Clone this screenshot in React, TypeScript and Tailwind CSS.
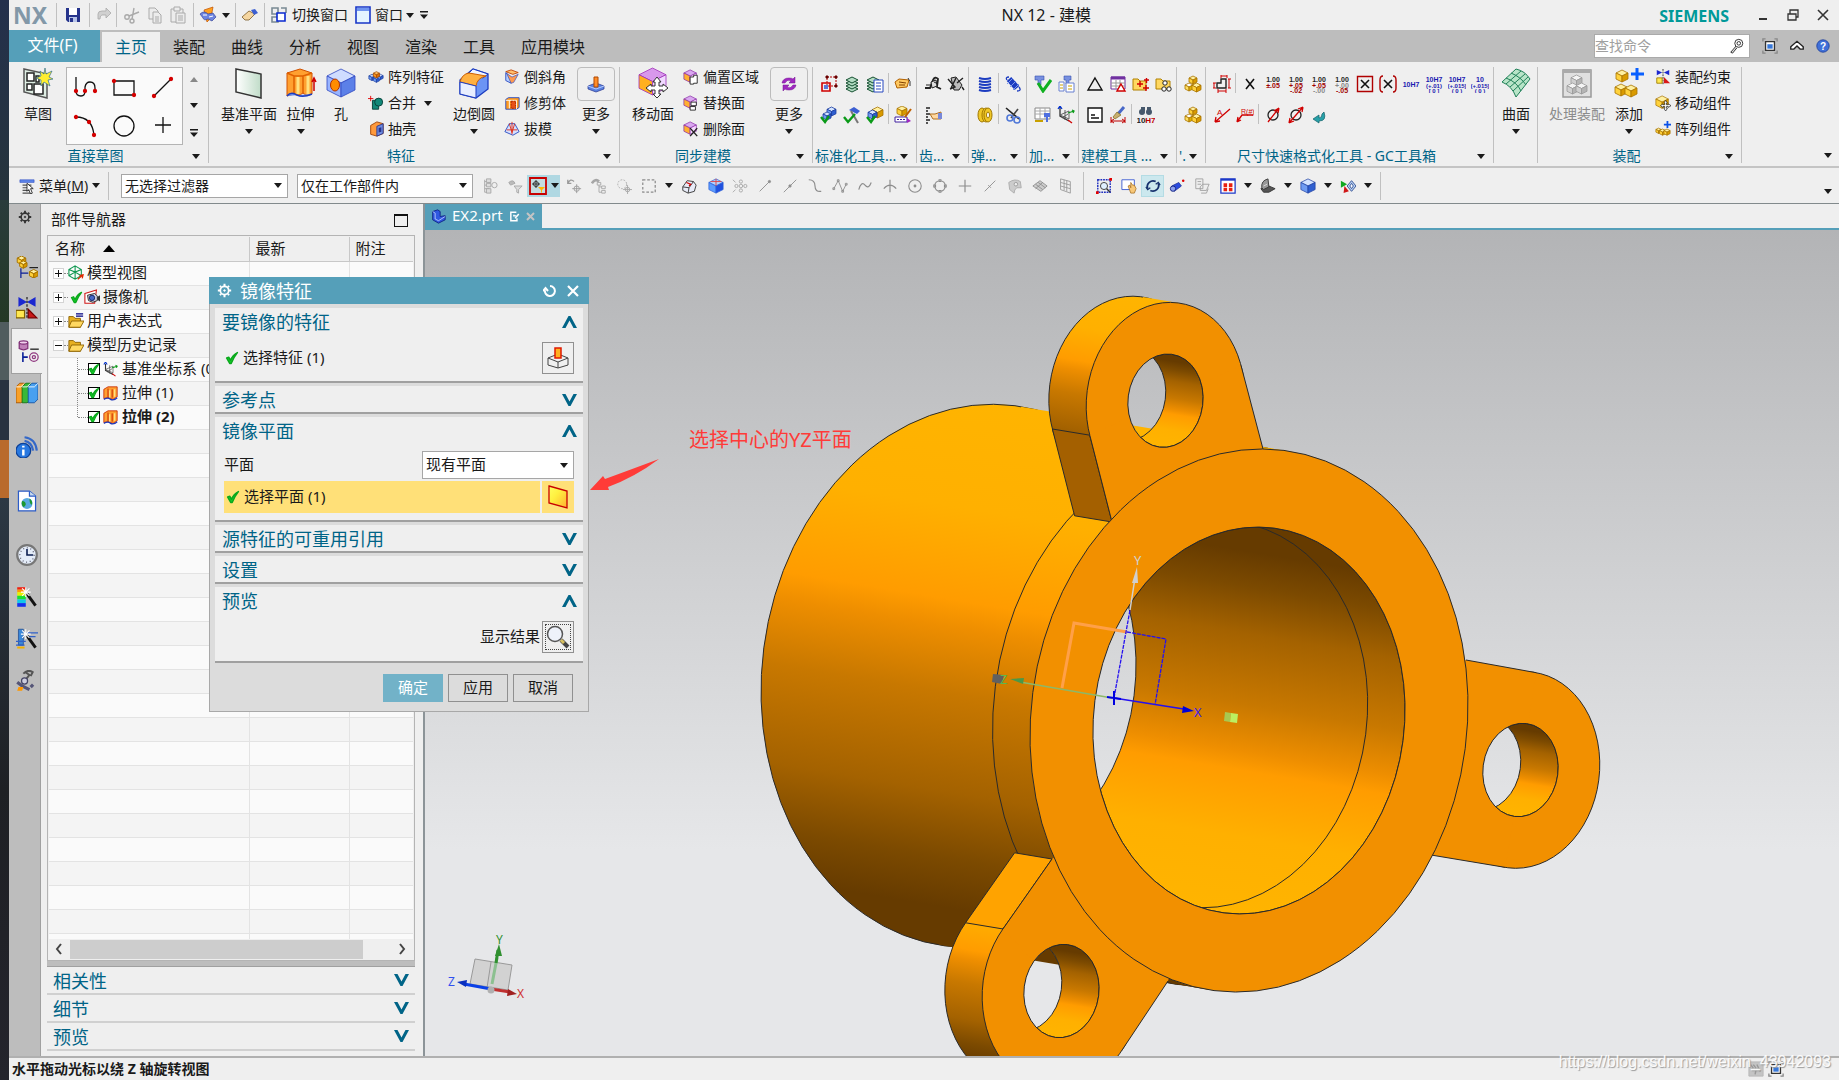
import type { ReactNode } from 'react'
import clsx from 'clsx'

type Pt = [number, number]

const pts = (list: Pt[]) => list.map((p) => p.join(',')).join(' ')

/* ---------- small drawing helpers ---------- */

function Cube({ x = 1, y = 1, s = 16, top = '#fff0a0', left = '#ffd23c', right = '#d99a00', line = '#a87400' }) {
  const h = s / 2
  const q = s / 4
  return (
    <g stroke={line} strokeWidth="0.8" strokeLinejoin="round">
      <polygon fill={top} points={pts([[x + h, y], [x + s, y + q], [x + h, y + h], [x, y + q]])} />
      <polygon fill={left} points={pts([[x, y + q], [x + h, y + h], [x + h, y + s], [x, y + s - q]])} />
      <polygon fill={right} points={pts([[x + s, y + q], [x + h, y + h], [x + h, y + s], [x + s, y + s - q]])} />
    </g>
  )
}

const blue = { top: '#d4e4ff', left: '#6f9cf2', right: '#2f5fd0', line: '#1c3ea0' }
const purple = { top: '#d9a8f0', left: '#ffb030', right: '#f6d9ff', line: '#8a2aa8' }
const grey = { top: '#f4f4f4', left: '#d0d0d0', right: '#b4b4b4', line: '#999' }

const Tick = () => (
  <path d="M2 9 L5 8 L7 12 C9 7 12 4 16 2 C12 7 10 11 8 16 L6 16 Z" fill="#14c828" stroke="#0aa81c" strokeWidth="1.8" strokeLinejoin="round" />
)

function Tol({ a, b, color = '#a00000', low = color }: { a: string; b: string; color?: string; low?: string }) {
  return (
    <g fontFamily="Liberation Sans, sans-serif" fontSize="7" fontWeight="700" textAnchor="middle">
      <text x="9" y="7" fill="#222">1.00</text>
      <text x="9" y="13" fill={color}>{a}</text>
      <text x="9" y="18" fill={low}>{b}</text>
    </g>
  )
}

function Fit({ a, b, c }: { a: string; b?: string; c?: string }) {
  return (
    <g fontFamily="Liberation Sans, sans-serif" fontSize="7" fontWeight="700" fill="#1a1ab0" textAnchor="middle">
      <text x="9" y={b ? 7 : 12}>{a}</text>
      {b && <text x="9" y="13" fontSize="6">{b}</text>}
      {c && <text x="9" y="18" fontSize="6">{c}</text>}
    </g>
  )
}

/* ---------- icons, all on an 18 x 18 grid ---------- */

const ICONS: Record<string, ReactNode> = {
  save: <g><path d="M2 2H16V16H4L2 14Z" fill="#26348c" /><path d="M5 2H13V9H5Z" fill="#fff" /><path d="M5 11H13V16H5Z" fill="#b8c4e8" /><path d="M6 12H9V16H6Z" fill="#26348c" /></g>,
  redo: <path d="M4 13V8Q4 5 8 5H12V2L17 7L12 12V9H8Q6 9 6 13Z" fill="#d0d0d0" stroke="#aaa" strokeWidth="0.8" />,
  cut: <g stroke="#aaa" fill="none" strokeWidth="1.4"><circle cx="4" cy="11" r="2.2" /><circle cx="9" cy="15" r="2" /><path d="M6 10L16 6M9 13L11 2" /></g>,
  copy: <g stroke="#aaa" fill="#ececec"><path d="M3 2H9L12 5V13H3Z" /><path d="M7 6H12L15 9V17H7Z" /><path d="M9 11H13M9 13H13M9 15H13" /></g>,
  paste: <g stroke="#aaa" fill="#ececec"><path d="M2 3H14V16H2Z" /><path d="M5 1H11V5H5Z" /><path d="M7 7H16V17H7Z" /><path d="M9 10H14M9 12H14M9 14H14" /></g>,
  orient: <g><path d="M5 4L14 1L12 12L8 16Z" fill="#ffa01e" stroke="#c05000" strokeWidth="0.7" /><path d="M1 8Q5 4 9 8L14 7L17 11L13 15L9 13Q5 15 4 12Z" fill="#6c84e0" stroke="#26348c" strokeWidth="0.6" /><path d="M4 9L8 9M10 11L14 10" stroke="#fff" /></g>,
  hand: <g><path d="M1 11L8 5L14 8L8 14H4Z" fill="#f5d6a0" stroke="#7a5a28" strokeWidth="0.8" /><path d="M10 4L14 3L17 7L13 9Z" fill="#3c5fd2" /></g>,
  switchWin: <g fill="none" strokeWidth="1.6"><path d="M2 2H8V8H2ZM11 2H16V7M2 11H8V16H2Z" stroke="#7a8a94" /><path d="M7 7H15V15H7Z" stroke="#0a2ad0" fill="#fff" /></g>,
  win: <g><path d="M2 1H16V17H2Z" fill="#e4f4ff" stroke="#1836c8" strokeWidth="1.6" /><path d="M3 2H15V5H3Z" fill="#6f94f0" /></g>,
  pattern: <g><Cube x={1} y={6} s={7} {...blue} /><Cube x={6} y={8} s={7} {...blue} /><Cube x={11} y={6} s={6} {...blue} /><Cube x={6} y={3} s={7} top="#ffc060" left="#ff9a1e" right="#e07000" line="#a04800" /></g>,
  unite: <g><path d="M5 6H12V16H5Z" fill="#128878" stroke="#043c34" /><circle cx="12" cy="8" r="4.5" fill="#128878" stroke="#043c34" /><path d="M3 1V7M0 4H6" stroke="#e00000" /></g>,
  shell: <g><path d="M3 5L10 1L17 3V14L10 17L3 15Z" fill="#ff9a3c" stroke="#a04000" /><path d="M10 6L17 3V14L10 17Z" fill="#6f8ce0" stroke="#26348c" /><path d="M12 8L15 7V12L12 13Z" fill="#26348c" /></g>,
  chamfer: <g><path d="M2 3L10 6L16 4L8 1Z" fill="#ffc070" stroke="#c04000" /><path d="M2 4V13L8 16V10Z" fill="#b8d0ff" stroke="#2848c0" /><path d="M3 5L9 9L16 6L11 15L8 16Z" fill="#ff9a50" stroke="#2848c0" strokeWidth="0.7" /></g>,
  trim: <g><path d="M2 5L5 3H17V14L14 16H2Z" fill="#ff9a1e" stroke="#2848c0" /><path d="M6 6V15M2 6H14V16" stroke="#fff" fill="none" /><path d="M8 7H13V15H8Z" fill="#e85018" stroke="#a82000" strokeDasharray="2 1" /></g>,
  draft: <g fill="none"><path d="M6 3H12L17 12L10 16L1 12Z" fill="#d4e0ff" stroke="#2848c0" /><path d="M9 1V15M6 3L9 13L12 3M3 10H15" stroke="#e02810" /></g>,
  moreFeat: <g><path d="M1 11L9 8L17 11V14L9 17L1 14Z" fill="#5a82e0" stroke="#26348c" strokeWidth="0.7" /><path d="M1 11L9 14L17 11" fill="none" stroke="#b8ccff" /><path d="M7 2H11V12H7Z" fill="#ff8c28" stroke="#b04800" /></g>,
  moreSync: <g fill="#a028c0" stroke="#701090" strokeWidth="0.5"><path d="M2 8Q3 3 9 3Q12 3 13 4L15 2V8H9L11 6Q7 4 5 8Z" /><path d="M16 10Q15 15 9 15Q6 15 5 14L3 16V10H9L7 12Q11 14 13 10Z" /></g>,
  offsetFace: <g><Cube x={1} y={1} s={14} {...purple} /><path d="M8 9H12V7H16V16H12V17H8Z" fill="#fff" stroke="#222" /></g>,
  replaceFace: <g><Cube x={1} y={1} s={14} {...purple} /><path d="M9 8H15V12H9ZM8 13H14V17H8Z" fill="#fff" stroke="#222" /></g>,
  deleteFace: <g><Cube x={1} y={1} s={14} {...purple} /><path d="M8 8L16 17M16 8L8 17" stroke="#222" strokeWidth="1.6" /></g>,
  frames: <g fill="none"><path d="M7 2H16V11H7Z" stroke="#b00000" strokeDasharray="2 1" /><path d="M2 8H10V16H2Z" stroke="#d00000" strokeWidth="1.6" /><path d="M4 10H8V14H4Z" fill="#5c78d8" /><path d="M6 1h2v2H6ZM15 1h2v2h-2ZM15 10h2v2h-2Z" fill="#600" stroke="#600" /></g>,
  layers: <g stroke="#145030" fill="#b4dcc4">{[14, 11, 8, 5].map((y) => <path key={y} d={`M3 ${y}L9 ${y - 3}L15 ${y}L9 ${y + 3}Z`} />)}</g>,
  layersDoc: <g stroke="#145030" fill="#b4dcc4">{[14, 11, 8, 5].map((y) => <path key={y} d={`M1 ${y}L7 ${y - 3}L13 ${y}L7 ${y + 3}Z`} />)}<path d="M8 5H17V17H8Z" fill="#fff" stroke="#2848c0" /><path d="M10 8H15M10 11H15M10 14H15" stroke="#2848c0" /></g>,
  tag: <g><path d="M1 7L5 4L15 5L13 12L3 13Z" fill="#ffc860" stroke="#b06000" /><path d="M5 7L12 8M5 10L11 10" stroke="#804000" /><path d="M14 3Q17 6 16 11" stroke="#333" fill="none" /></g>,
  partCheck: <g><Cube x={7} y={1} s={9} {...blue} /><Cube x={3} y={6} s={8} {...blue} /><path d="M1 11L5 16L9 10" stroke="#0a9a18" strokeWidth="2.4" fill="none" /></g>,
  toolCheck: <g><path d="M6 4L11 1L17 5L14 8Z" fill="#3c5fd2" /><path d="M15 17L8 5" stroke="#777" strokeWidth="2" /><path d="M1 11L5 16L12 8" stroke="#0a9a18" strokeWidth="2.4" fill="none" /></g>,
  cubeCheck: <g><Cube x={6} y={1} s={11} /><Cube x={2} y={4} s={9} {...blue} /><path d="M1 11L5 16L9 10" stroke="#0a9a18" strokeWidth="2.4" fill="none" /></g>,
  partEdit: <g><Cube x={3} y={0} s={10} /><path d="M1 11H13V16H1Z" fill="#fff" stroke="#4020a0" /><path d="M3 13.500H11" stroke="#4020a0" strokeDasharray="2 1" /><path d="M17 3L11 11" stroke="#c06000" strokeWidth="2" /><path d="M13 12L17 15L13 17Z" fill="#a028c0" /></g>,
  gearA: <g stroke="#222" fill="none"><path d="M1 13H6L9 5Q11 1 14 4L13 12L17 14" strokeWidth="1.8" /><path d="M7 7L12 5L13 11L8 13Z" fill="#ddd" /><path d="M2 10L8 10M10 7L14 9" /></g>,
  gearB: <g stroke="#222" fill="#bbb"><path d="M4 3L9 2L15 10L12 15L7 15Z" /><path d="M1 4L8 12L3 14M16 3L10 8M9 3L4 13M15 12L17 15" fill="none" strokeWidth="1.4" /></g>,
  gearHand: <g><path d="M2 2H6M2 5H4M2 8H6M2 11H4M2 14H6M2 17H4" stroke="#222" strokeWidth="1.4" /><path d="M6 8H11L17 6V13H9Z" fill="#ffd8a0" stroke="#b07020" /><path d="M14 7H18V13H14Z" fill="#7888d8" /></g>,
  springV: <g stroke="#1c3cc0" strokeWidth="2" fill="none">{[3, 6, 9, 12, 15].map((y) => <path key={y} d={`M3 ${y}Q9 ${y + 2} 15 ${y}`} />)}</g>,
  springD: <g stroke="#1c3cc0" fill="none"><path d="M5 4L13 13" strokeWidth="6" /><path d="M3 9L9 3M6 12L12 6M9 15L15 9" stroke="#7c98f0" strokeWidth="1" /><path d="M3 5Q1 2 5 2M15 12Q18 16 13 16" strokeWidth="1.3" /></g>,
  springY: <g stroke="#a07800" fill="#f0c828"><ellipse cx="6" cy="9" rx="4" ry="7" /><ellipse cx="10" cy="9" rx="4" ry="7" /><ellipse cx="12" cy="9" rx="4" ry="7" /><ellipse cx="12" cy="9" rx="1.500" ry="3" fill="#fff" /></g>,
  springCut: <g fill="none"><path d="M2 2L15 13" stroke="#222" strokeWidth="1.6" /><path d="M14 3L7 12" stroke="#444" strokeWidth="1.6" /><circle cx="6" cy="12" r="3" stroke="#5078d8" strokeWidth="1.6" /><circle cx="13" cy="14" r="3" stroke="#5078d8" strokeWidth="1.6" /></g>,
  clampCheck: <g><path d="M1 1H10V5H7V10H4V5H1Z" fill="#7890e0" stroke="#3850b0" strokeWidth="0.6" /><path d="M4 8L9 16L17 5" stroke="#10b020" strokeWidth="3" fill="none" /></g>,
  clampDoc: <g><path d="M7 1H14V5H12V9H9V5H7Z" fill="#7890e0" stroke="#3850b0" strokeWidth="0.6" /><path d="M2 7H7V16H2ZM9 8H17V17H9Z" fill="#fff" stroke="#6880d0" /><path d="M11 11H15M11 14H15M3 10H6M3 13H6" stroke="#c8a000" /></g>,
  sheetClamp: <g><path d="M1 2H16V13H1Z" fill="#fff" stroke="#888" /><path d="M1 5H16M1 8H16M6 2V13M11 2V13" stroke="#aaa" /><path d="M10 7H16V11H14V16H12V11H10Z" fill="#5070e0" /><path d="M1 15H9" stroke="#c8a000" strokeWidth="2" /></g>,
  csys: <g fill="none" strokeWidth="1.3"><path d="M3 2V10L12 15" stroke="#333" /><path d="M3 9L12 5V13ZM8 4V14M5 12L11 8" stroke="#555" strokeWidth="0.9" /><path d="M11 7L17 5M15 4L17 5L16 7" stroke="#0a9a18" /><path d="M11 14L15 17" stroke="#d00000" /><path d="M1 3L3 0L5 3" stroke="#0030d0" /></g>,
  triangle: <path d="M9 3L16 15H2Z" fill="none" stroke="#111" strokeWidth="1.400" />,
  tableTri: <g><path d="M2 2H16V14H2Z" fill="#fff" stroke="#7030a0" /><path d="M2 3H16" stroke="#7030a0" strokeWidth="3" /><path d="M2 8H16M2 11H16M7 5V14M11 5V14" stroke="#999" /><path d="M12 9L16 16H8Z" fill="#fff" stroke="#d00000" strokeWidth="1.4" /></g>,
  folderPlus: <g><path d="M1 4H6L8 6H14V15H1Z" fill="#ffd860" stroke="#b08000" /><path d="M5 9h6M8 6v6M11 13h6M14 10v6M12 5h5M14.500 3v5" stroke="#d00000" strokeWidth="1.400" /></g>,
  folderCog: <g><path d="M1 4H6L8 6H15V14H1Z" fill="#ffd860" stroke="#b08000" /><g fill="#fff" stroke="#222"><circle cx="10" cy="8" r="2.200" /><circle cx="9" cy="14" r="2.200" /><circle cx="14" cy="14" r="2.200" /></g></g>,
  noteBox: <g fill="none" stroke="#111" strokeWidth="1.400"><path d="M2 2H16V16H2Z" fill="#fff" /><path d="M5 9H9M5 12H13" /></g>,
  brushDim: <g><path d="M15 1L9 8" stroke="#4868c8" strokeWidth="3" /><path d="M8 6L12 9L6 13L4 11Z" fill="#c8b070" stroke="#806820" strokeWidth="0.7" /><path d="M2 11V17M16 11V17M2 15H16M5 13L2 15L5 17M13 13L16 15L13 17" stroke="#c00000" fill="none" /></g>,
  binoc: <g><g fill="#46586c"><circle cx="5" cy="6" r="3" /><circle cx="12" cy="6" r="3" /><path d="M4 1H8V5H4ZM10 1H14V5H10Z" /></g><text x="9" y="17" fontSize="8" fontWeight="700" textAnchor="middle" fontFamily="Liberation Sans, sans-serif" fill="#222">10<tspan fill="#c00000">H7</tspan></text></g>,
  cubes: <g><Cube x={5} y={1} s={8} /><Cube x={1} y={8} s={8} top="#fff" left="#ffe060" right="#e0b000" /><Cube x={8} y={8} s={9} /></g>,
  dimShape: <g fill="none"><path d="M4 13V8H8V4H13V13Z" stroke="#222" strokeWidth="1.400" /><path d="M1 8V13M0 8H3M0 13H3M16 4V13M15 4H18M15 13H18M5 16H13M5 14V18M13 14V18M8 1H14M8 0V3M14 0V3" stroke="#d00000" /></g>,
  xPlain: <path d="M5 4L13 14M13 4L5 14" stroke="#111" strokeWidth="1.600" />,
  tol1: <Tol a="±.05" b="" />,
  tol2: <Tol a="+.05" b="-.02" />,
  tol3: <Tol a="+.05" b="-.00" low="#888" />,
  tol4: <Tol a="+.00" b="-.05" color="#888" low="#a00000" />,
  xBox: <g fill="none"><path d="M1.500 1.500H16.500V16.500H1.500Z" stroke="#b00000" strokeWidth="1.400" /><path d="M5 5L13 13M13 5L5 13" stroke="#111" strokeWidth="1.600" /></g>,
  xParen: <g fill="none"><path d="M4 1Q1 1 1 5V13Q1 17 4 17M14 1Q17 1 17 5V13Q17 17 14 17" stroke="#b00000" strokeWidth="1.400" /><path d="M5 5L13 13M13 5L5 13" stroke="#111" strokeWidth="1.600" /></g>,
  fit1: <Fit a="10H7" />,
  fit2: <Fit a="10H7" b="(+.01)" c="[ 0 ]" />,
  fit3: <Fit a="10H7" b="(+.015)" c="( 0 )" />,
  fit4: <Fit a="10" b="(+.015)" c="( 0 )" />,
  radA: <g fill="none" stroke="#d00000" strokeWidth="1.300"><path d="M2 16L17 3M2 16L3 11M2 16L7 15" /><text x="4" y="9" fontSize="8" stroke="none" fill="#d00000" fontFamily="Liberation Sans, sans-serif">A.</text></g>,
  radB: <g fill="none" stroke="#d00000" strokeWidth="1.300"><path d="M1 16L6 9H17M1 16L2 11M1 16L5 14" /><text x="5" y="8" fontSize="7" stroke="none" fill="#d00000" fontFamily="Liberation Sans, sans-serif">R(#)</text></g>,
  diaA: <g fill="none"><circle cx="9" cy="9" r="5" stroke="#222" strokeWidth="1.300" /><path d="M4 16L15 2M15 2L10 5M15 2L14 7" stroke="#d00000" strokeWidth="1.300" /></g>,
  diaB: <g fill="none"><circle cx="9" cy="9" r="5" stroke="#222" strokeWidth="1.300" /><path d="M2 17L16 1M16 1L11 3M16 1L15 6M2 17L3 12M2 17L7 15" stroke="#d00000" strokeWidth="1.300" /></g>,
  back: <path d="M14 6Q17 15 9 15V17L3 13L9 9V12Q12 12 12 8Z" fill="#28a0a8" stroke="#106068" strokeWidth="0.7" />,
  asmCon: <g><path d="M2 1L8 4L2 7ZM16 1L10 4L16 7Z" fill="#1c28d0" /><path d="M9 0V18" stroke="#222" strokeDasharray="2 1" /><path d="M2 10H8V16H2Z" fill="#ffe850" stroke="#a08000" /><path d="M10 9L17 16H10Z" fill="#d81818" /></g>,
  asmMove: <g><Cube x={1} y={1} s={14} /><path d="M12 6L14 9H13V11H15V10L18 12L15 14V13H13V15H14L12 18L10 15H11V13H9V14L6 12L9 10V11H11V9H10Z" fill="#fff" stroke="#222" strokeWidth="0.8" /></g>,
  asmPat: <g><Cube x={1} y={8} s={6} /><Cube x={5} y={9} s={7} /><Cube x={10} y={9} s={7} /><path d="M14 0V8M10 4H18" stroke="#0a50e8" strokeWidth="2" /></g>,
  menu: <g><path d="M1 2H17V5H1Z" fill="#5c84e8" stroke="#2848c0" strokeWidth="0.6" /><path d="M4 8H14M4 11H10M4 14H12M4 17H13" stroke="#555" strokeWidth="1.300" /><path d="M9 6L16 12H13L15 17L13 18L11 13L9 15Z" fill="#fff" stroke="#111" strokeWidth="0.9" /></g>,
  gTree: <g fill="none" stroke="#a6a6a6"><path d="M3 2V16M3 4H8V8H3M3 12H8V16H3" /><path d="M5 1h5v4H5ZM5 6h5v4H5ZM5 12h5v5H5Z" fill="#ddd" /><circle cx="14" cy="8" r="3" /></g>,
  gFilter: <g fill="none" stroke="#a6a6a6"><path d="M2 5Q7 1 9 6L4 8Z" fill="#bbb" /><path d="M8 9H17L13 13V17L11 16V13Z" fill="#ddd" /></g>,
  snapOn: <g><path d="M1 1H17V17H1Z" fill="#c4dce0" stroke="#c80000" strokeWidth="1.800" /><circle cx="7" cy="7" r="2.500" fill="none" stroke="#333" /><path d="M7 3V11M3 7H11" stroke="#333" /><path d="M9 10H16L13 13V16L12 15V13Z" fill="#ffb400" /></g>,
  gTarget: <g fill="none" stroke="#9a9a9a"><path d="M2 6Q5 0 9 4M2 2V6H6" strokeWidth="1.500" /><circle cx="12" cy="12" r="3" /><path d="M12 7V17M7 12H17" /></g>,
  gTree2: <g fill="none" stroke="#a6a6a6"><path d="M1 6Q5 0 9 4" strokeWidth="3" /><path d="M7 5h4v3H7ZM12 9h4v3h-4ZM12 14h4v3h-4ZM9 8V16H12M9 10H12" /></g>,
  gLasso: <g fill="none" stroke="#a6a6a6"><circle cx="7" cy="7" r="5" strokeDasharray="2 1.500" /><circle cx="13" cy="13" r="2.500" /><path d="M13 8V18M8 13H18" /></g>,
  gRect: <g fill="none" stroke="#8c8c8c"><path d="M2 2H16V16H2Z" strokeDasharray="3 2" strokeWidth="1.400" /></g>,
  solidFace: <g><path d="M2 10L7 3L14 4L17 8L15 15L8 17L2 14Z" fill="#e8ecf8" stroke="#333" /><path d="M2 10L9 11L14 4M9 11L8 17" fill="none" stroke="#333" /><path d="M6 5L11 7L9 9" fill="none" stroke="#d00000" strokeWidth="1.300" /></g>,
  solidCube: <g><Cube x={1} y={1} s={16} top="#b4d4ff" left="#5c9cff" right="#2050e0" line="#2c60d8" /><path d="M3 4H15M9 1V9" stroke="#e04040" /></g>,
  gMove: <g fill="none" stroke="#a6a6a6"><circle cx="10" cy="9" r="2" /><circle cx="10" cy="4" r="1.800" /><circle cx="10" cy="14" r="1.800" /><circle cx="5" cy="9" r="1.800" /><circle cx="15" cy="9" r="1.800" /><path d="M1 2L4 5M1 16L4 13" /></g>,
  gLine: <g stroke="#8c8c8c" fill="#8c8c8c"><path d="M3 15L14 4" /><circle cx="14" cy="4" r="1.300" /></g>,
  gLineMid: <g stroke="#8c8c8c" fill="#8c8c8c"><path d="M2 16L16 2" /><circle cx="9" cy="9" r="1.300" /></g>,
  gCurve: <path d="M2 2Q9 2 9 9Q9 16 16 15" fill="none" stroke="#8c8c8c" strokeWidth="1.300" />,
  gPoly: <g fill="none" stroke="#8c8c8c"><path d="M2 12L7 3L12 15L16 7" /><path d="M1 11h2v2H1ZM6 2h2v2H6ZM11 14h2v2h-2ZM15 6h2v2h-2Z" /></g>,
  gWave: <path d="M2 13Q5 3 9 8Q13 13 16 5" fill="none" stroke="#8c8c8c" strokeWidth="1.300" />,
  gPerp: <path d="M2 12Q9 4 16 12M9 2V16" fill="none" stroke="#8c8c8c" strokeWidth="1.300" />,
  gCenter: <g fill="none" stroke="#8c8c8c" strokeWidth="1.200"><circle cx="9" cy="9" r="7" /><circle cx="9" cy="9" r="1" fill="#8c8c8c" /></g>,
  gQuad: <g fill="none" stroke="#8c8c8c" strokeWidth="1.200"><circle cx="9" cy="9" r="6" /><path d="M8 2h2v2H8ZM8 14h2v2H8ZM2 8h2v2H2ZM14 8h2v2h-2Z" fill="#efefef" /></g>,
  gPlus: <path d="M9 2V16M2 9H16" stroke="#8c8c8c" strokeWidth="1.300" />,
  gSlash: <g stroke="#8c8c8c"><path d="M3 15L15 3" /><path d="M7 8L10 11" /></g>,
  gSurf: <g><path d="M2 5Q9 0 15 4L16 11L11 11Q8 13 8 17L3 13Z" fill="#ccc" stroke="#aaa" /><circle cx="10" cy="7" r="2" fill="#eee" stroke="#999" /></g>,
  gMesh: <g stroke="#888" fill="#ccc" strokeWidth="0.900"><path d="M1 9L9 3L17 9L10 15Z" /><path d="M4 7L12 13M7 5L15 11M4 12L12 5" fill="none" /></g>,
  gGrid: <g stroke="#999" fill="none"><path d="M4 1L15 4V17L4 13ZM8 2V14M11 3V15M4 5L15 8M4 9L15 12" /></g>,
  zoomFit: <g><path d="M2 2H16V16H2Z" fill="none" stroke="#2030c0" strokeWidth="1.600" strokeDasharray="2 1" /><circle cx="9" cy="9" r="4" fill="#e0f0ff" stroke="#333" /><path d="M12 12L16 16" stroke="#333" strokeWidth="1.600" /><path d="M0 15h3v3H0ZM15 0h3v3h-3Z" fill="#e00000" /></g>,
  panWin: <g><path d="M1 2H15V13H1Z" fill="#fff" stroke="#3858d0" /><path d="M8 9L10 8L11 11V5L13 8L15 8L17 12L15 17H11Z" fill="#f8c878" stroke="#a06818" strokeWidth="0.800" /></g>,
  rotate: <g fill="none" stroke="#16306c" strokeWidth="2"><path d="M3 12A6.500 6.500 0 0 1 12 4M15 6A6.500 6.500 0 0 1 6 14" /><path d="M1 10L3 13L6 11M17 8L15 5L12 7" strokeWidth="1.400" /></g>,
  tube: <g><path d="M3 9L11 5L14 9L6 15Z" fill="#2c4ce0" stroke="#102080" strokeWidth="0.700" /><circle cx="4.500" cy="12" r="3" fill="#8ca0f0" stroke="#102080" /><circle cx="16" cy="3" r="1.400" fill="#e00000" /></g>,
  gDoc: <g fill="#eee" stroke="#a0a0a0"><path d="M2 1H10V12H2ZM7 10L10 7H17L14 14H7ZM4 4H8M4 7H8M8 17H14L16 12" /></g>,
  redGrid: <g><path d="M1 1H17V17H1Z" fill="#fff" stroke="#1c38c8" strokeWidth="1.400" /><path d="M1 2H17" stroke="#1c38c8" strokeWidth="2" /><g fill="#e82010"><path d="M4 6h4v4H4ZM10 6h4v4h-4ZM4 11h4v4H4ZM10 11h4v4h-4Z" /></g></g>,
  section: <g fill="#999" stroke="#333"><path d="M1 12L10 9L17 12L10 16H4Z" fill="#555" /><path d="M2 11Q1 3 9 1L10 10L4 13Z" /><path d="M4 9L8 7" stroke="#ddd" /></g>,
  bCube: <Cube x={1} y={1} s={16} {...blue} />,
  rgb: <g><path d="M1 3L8 7L1 11Z" fill="#10a820" /><path d="M5 9L10 15L4 17Z" fill="#d01818" /><path d="M13 3L18 9L13 15L8 9Z" fill="#b8d0f4" stroke="#2c4c90" /><path d="M13 6L15 9L13 12L11 9Z" fill="#fff" stroke="#2c4c90" /></g>,
  search: <g fill="none" stroke="#222"><circle cx="11" cy="6" r="4.500" /><circle cx="11" cy="6" r="2" /><path d="M8 9L2 16L4 17L9 11" fill="#ddd" /></g>,
  screen: <g fill="none" stroke="#333"><path d="M1 4V1H4M14 1H17V4M17 14V17H14M4 17H1V14" stroke="#888" strokeWidth="1.500" /><path d="M4 4H14V14H4Z" fill="#fff" strokeWidth="1.500" /><path d="M6 7H12V12H6Z" fill="#3878d8" stroke="none" /></g>,
  collapse: <path d="M1 10L9 3L17 10V13L13 13L9 9L5 13L1 13Z" fill="#fff" stroke="#222" strokeWidth="1.800" />,
  help: <g><circle cx="9" cy="9" r="8" fill="#4070d8" stroke="#1c3c98" /><text x="9" y="14" fontSize="13" fontWeight="700" fill="#fff" textAnchor="middle" fontFamily="Liberation Sans, sans-serif">?</text></g>,
  gear: <g fill="none" stroke="currentColor"><circle cx="9" cy="9" r="5" strokeWidth="2" /><circle cx="9" cy="9" r="1" fill="currentColor" /><path d="M9 1V4M9 14V17M1 9H4M14 9H17M3.500 3.500L5 5M13 13L14.500 14.500M3.500 14.500L5 13M13 5L14.500 3.500" strokeWidth="2.400" /></g>,
  navAsm: <g><Cube x={1} y={0} s={7} /><Cube x={3} y={4} s={6} /><Cube x={11} y={11} s={7} /><path d="M4 10V18M4 14H10" stroke="#0a1e98" /><path d="M11 9.500H18" stroke="#222" /></g>,
  navCon: <g><path d="M2 0L9 4L2 8ZM16 0L9 4L16 8Z" fill="#1c28d0" /><path d="M9 0V18" stroke="#222" strokeDasharray="2 1" /><path d="M0 11H7V17H0Z" fill="#ffe850" stroke="#806000" /><path d="M10 10L17 17H10Z" fill="#c81818" stroke="#700" /></g>,
  navPart: <g><path d="M1 2V7Q4.500 9 8 7V2" fill="#c080b8" stroke="#803078" /><ellipse cx="4.500" cy="2" rx="3.500" ry="1.300" fill="#f0d0ec" stroke="#803078" /><path d="M4 10V18M4 14H8" stroke="#0a1e98" strokeWidth="1.300" /><path d="M10 7.500H17" stroke="#111" /><circle cx="13" cy="14" r="3.500" fill="none" stroke="#903880" /><circle cx="13" cy="14" r="1.300" fill="none" stroke="#903880" /></g>,
  books: <g strokeWidth="0.700"><path d="M0 4L3 1H7V15L4 17H0Z" fill="#f8a028" stroke="#a05000" /><path d="M5 4L8 1H12V15L9 17H5Z" fill="#38b838" stroke="#107010" /><path d="M10 4L13 1H18V14L15 17H10Z" fill="#48a0f0" stroke="#1050a0" /><path d="M0 4H4L7 1M5 4H9L12 1M10 4H15L18 1" fill="none" stroke="#fff" /></g>,
  info: <g><circle cx="6" cy="12" r="6" fill="#2878e0" stroke="#0c4098" /><path d="M6 8V9.500M6 11V16" stroke="#fff" strokeWidth="2" /><path d="M7 1Q16 2 17 12M7 4Q13 5 14 12" fill="none" stroke="#3468c8" strokeWidth="1.800" /></g>,
  web: <g><path d="M2 1H11L16 5V17H2Z" fill="#fff" stroke="#2c5cc8" /><path d="M11 1V5H16" fill="#cde" stroke="#2c5cc8" /><circle cx="9" cy="11" r="4.500" fill="#58a8e0" /><path d="M5 9Q8 9 8 12Q7 14 6 14Q4 12 5 9ZM11 7Q14 9 13 12Q11 12 11 7Z" fill="#1c9830" /></g>,
  clock: <g><circle cx="9" cy="9" r="8" fill="#e4ecf8" stroke="#777" strokeWidth="1.800" /><circle cx="9" cy="9" r="5.800" fill="none" stroke="#556" strokeDasharray="0.800 2.200" /><path d="M9 4V9H14" fill="none" stroke="#0a1e50" strokeWidth="1.300" /></g>,
  rainbow: <g><path d="M1 1H8V3H1Z" fill="#f02010" /><path d="M1 3H8V5H1Z" fill="#ff9800" /><path d="M1 5H8V8H1Z" fill="#e8f000" /><path d="M1 8H8V11H1Z" fill="#18e030" /><path d="M1 11H8V14H1Z" fill="#10c8e8" /><path d="M1 14H8V17H1Z" fill="#1030f0" /><path d="M8 5L16 16" stroke="#111" strokeWidth="2.400" /><path d="M8 1V9M4 5H12M5 2L11 8M11 2L5 8" stroke="#fff" strokeWidth="0.900" /></g>,
  boltWand: <g><path d="M2 1H6V14H2Z" fill="#3c88d8" stroke="#1c4890" strokeWidth="0.600" /><path d="M8 4H18M9 7H16M0 11H8M0 14H7" stroke="#3060c8" /><path d="M8 5L16 16" stroke="#111" strokeWidth="2.400" /><path d="M8 1V9M4 5H12M5 2L11 8M11 2L5 8" stroke="#fff" strokeWidth="0.900" /><path d="M1 16H7" stroke="#f0b000" strokeWidth="1.600" /></g>,
  robot: <g fill="none"><path d="M6 3Q10 -1 14 2M14 1L12 5M8 2L11 4L7 9" stroke="#555" strokeWidth="1.600" /><circle cx="7" cy="9" r="2.500" fill="#ccd" stroke="#446" /><path d="M1 10L5 13L11 16M12 14L14 12" stroke="#557" strokeWidth="2.600" /><path d="M2 14H6L5 17H1Z" fill="#ff9800" /></g>,
  tick: <Tick />,
  treeView: <g fill="none" stroke="#109850"><path d="M8 1L15 5V12L8 16L1 12V5ZM1 5L8 8L15 5M8 1V16M1 12L8 8L15 12" strokeWidth="1.200" /><path d="M11 16L17 11M13 12L17 11L16 15" stroke="#e02800" strokeWidth="1.400" /></g>,
  camera: <g><path d="M1 5L14 1L12 16L1 16Z" fill="#fff" stroke="#d01818" strokeWidth="1.200" /><path d="M4 7L12 5L15 8V13L10 15L5 13Z" fill="#ccd" stroke="#222" /><circle cx="9" cy="10" r="3" fill="#4868c8" stroke="#102060" /><path d="M15 9L18 7V14L15 12Z" fill="#333" /></g>,
  folder: <g><path d="M1 4H6L8 6H14V16H1Z" fill="#e8b020" stroke="#8a6000" /><path d="M4 9H18L14 16H1Z" fill="#ffd860" stroke="#8a6000" /></g>,
  folderEq: <g><path d="M1 4H6L8 6H14V16H1Z" fill="#e8b020" stroke="#8a6000" /><path d="M4 9H18L14 16H1Z" fill="#ffd860" stroke="#8a6000" /><path d="M9 1H17M9 3.500H17" stroke="#000080" strokeWidth="1.200" /></g>,
  extrude: <g><path d="M1 4L6 1H17V13L12 16L7 14L1 15Z" fill="#ffa030" stroke="#c82800" /><path d="M6 3V14M11 4V14" stroke="#c82800" strokeWidth="1.200" /><path d="M8 5V14M14 4V13" stroke="#ffe080" strokeWidth="1.600" /><path d="M1 16Q6 13 9 16Q13 18 17 14" fill="none" stroke="#2038b8" strokeWidth="1.600" /></g>,
  part: <g><path d="M2 3L8 1L11 3V9L17 8V13L9 17L2 13Z" fill="#3058e0" stroke="#0c1e80" /><path d="M2 3L5 5V12L9 14L17 9" fill="none" stroke="#c0d0ff" /></g>,
  editDoc: <g fill="none" stroke="#fff" strokeWidth="2.400"><path d="M12 2H3V16H13V12" /><path d="M8 6V8H12" /><path d="M16 5L10 12" /></g>,
  kbd: <g stroke="#999" fill="none"><path d="M1 1H17V17H1Z" fill="#c4c4c4" stroke="#b8b8b8" /><path d="M3 4L6 8M6 4L9 8M10 4L12 8M9 10L8 15M12 9L14 12" strokeWidth="1.600" /></g>,
}

function Icon({ name, className = 'size-[18px]' }: { name: string; className?: string }) {
  return <svg viewBox="0 0 18 18" className={clsx('shrink-0', className)} aria-hidden="true">{ICONS[name]}</svg>
}

const Caret = ({ className = 'text-[#1a1a1a]' }: { className?: string }) => (
  <svg viewBox="0 0 8 5" className={clsx('h-[5px] w-2 shrink-0', className)} aria-hidden="true"><path d="M0 0H8L4 5Z" fill="currentColor" /></svg>
)

const BarCaret = () => (
  <svg viewBox="0 0 8 8" className="size-2 shrink-0" aria-hidden="true"><path d="M0 0H8V1.500H0ZM0 3.500H8L4 8Z" fill="#1a1a1a" /></svg>
)

const Chevron = ({ up = false }: { up?: boolean }) => (
  <svg viewBox="0 0 15 12" className={clsx('h-3 w-[15px] shrink-0', up && 'rotate-180')} aria-hidden="true"><path d="M0 0H3.500L7.500 7.500L11.500 0H15L8.500 12H6.500Z" fill="#006487" /></svg>
)

/* ---------- large ribbon icons, 30 x 30 ---------- */

const BIG: Record<string, ReactNode> = {
  sketch: <g fill="none" stroke="#222"><path d="M1 1L24 6V30L1 24Z" fill="#dfeee4" stroke="#555" strokeWidth="1.500" /><path d="M4 5H11V13H4ZM13 8H16V14H13ZM4 16H9V22H4ZM11 16H20V26H11Z" fill="#fff" strokeWidth="1.500" /><path d="M22 0L23 6L29 3L26 9L30 11L25 12L27 18L21 14L18 18L18 12L13 10L18 8L17 3L21 6Z" fill="#ffee30" stroke="#30708c" strokeWidth="0.700" /></g>,
  plane: <path d="M2 1L27 6V30L2 24Z" fill="url(#planeFill)" stroke="#333" strokeWidth="1.500" />,
  extrude: <g><path d="M1 5L14 1L26 5V26Q21 29 17 25Q12 29 8 26L1 28Z" fill="#ffa030" stroke="#d05000" /><path d="M8 8V26M17 8V25M1 5L8 8L17 8L26 5" fill="none" stroke="#e06000" strokeWidth="1.500" /><path d="M12 9V26M22 8V26" stroke="#ffe080" strokeWidth="3" /><path d="M1 28Q5 23 11 27Q17 30 26 26" fill="#6890f0" stroke="#1c3cc0" strokeWidth="1.500" /><path d="M28 23V11M26 14L28 10L30 14" fill="none" stroke="#d00000" strokeWidth="1.500" /></g>,
  hole: <g><Cube x={1} y={1} s={28} top="#cfdcff" left="#98b4ff" right="#5c80e8" line="#3048c0" /><ellipse cx="9" cy="17" rx="4.500" ry="6" fill="#ff8c00" stroke="#b03000" /></g>,
  round: <g><path d="M1 12L14 1L29 6V21L17 30L1 26Z" fill="#6c94f4" stroke="#1c3cc0" strokeWidth="1.300" /><path d="M14 1L29 6L24 10L10 5Z" fill="#f0f4ff" stroke="#1c3cc0" /><path d="M1 14Q3 6 10 5L27 8Q18 10 17 18Z" fill="#ffb040" stroke="#d06000" /><path d="M1 14L17 18V30L1 26Z" fill="#e8eeff" stroke="#1c3cc0" /></g>,
  moveFace: <g><Cube x={1} y={0} s={27} top="#d898ec" left="#ffb020" right="#f0d8ff" line="#a030b8" /><path d="M19 9L23 14H21V18H25V16L30 20L25 24V22H21V26H23L19 30L15 26H17V22H13V24L8 20L13 16V18H17V14H15Z" fill="#fff" stroke="#333" /></g>,
  surface: <g fill="none" stroke="#208058"><path d="M1 14L15 1Q24 3 29 11L15 29Q11 18 1 14Z" fill="#b8e4c8" /><path d="M5 10Q16 14 20 23M10 5Q20 9 25 17M5 16L20 3M9 19L24 6M12 23L27 9" /></g>,
  handle: <g><path d="M1 2H29V29H1Z" fill="#e0e0e0" stroke="#999" strokeWidth="1.500" /><path d="M1 3H29" stroke="#aaa" strokeWidth="4" /><Cube x={9} y={7} s={11} {...grey} /><Cube x={5} y={15} s={11} {...grey} /><Cube x={14} y={15} s={11} {...grey} /></g>,
  add: <g><Cube x={2} y={2} s={12} /><Cube x={1} y={16} s={12} /><Cube x={11} y={17} s={12} /><path d="M23 0V12M17 6H30" stroke="#0a60ff" strokeWidth="3" /></g>,
}

function BigButton({ icon, label, caret = true, width, disabled }: { icon: string; label: string; caret?: boolean; width: string; disabled?: boolean }) {
  return (
    <button type="button" disabled={disabled} className={clsx('flex h-20 shrink-0 flex-col items-center pt-px', width, disabled && 'text-[#8c8c8c]')}>
      <svg viewBox="0 0 30 31" className="h-[31px] w-[30px] overflow-visible" aria-hidden="true">
        <defs><linearGradient id="planeFill"><stop offset="0" stopColor="#fff" /><stop offset="1" stopColor="#c0dcc8" /></linearGradient></defs>
        {BIG[icon]}
      </svg>
      <span className="mt-1 leading-[22px] whitespace-nowrap">{label}</span>
      {caret && <Caret className="mt-1 text-[#1a1a1a]" />}
    </button>
  )
}

function MoreButton({ icon }: { icon: string }) {
  return (
    <button type="button" className="flex h-20 w-[38px] shrink-0 flex-col items-center">
      <span className="flex h-[34px] w-[38px] items-center justify-center rounded border border-[#bcbcbc]"><Icon name={icon} /></span>
      <span className="mt-[2px] leading-[22px]">更多</span>
      <Caret className="mt-1 text-[#1a1a1a]" />
    </button>
  )
}

function SmallRows({ items, width }: { items: [string, string][]; width: string }) {
  return (
    <div className={clsx('-mt-[3px] flex shrink-0 flex-col', width)}>
      {items.map(([icon, label]) => (
        <button key={label} type="button" className="flex h-[26px] items-center gap-1 whitespace-nowrap">
          <Icon name={icon} className="size-4" />
          {label}
          {label === '合并' && <Caret className="ml-1 text-[#1a1a1a]" />}
        </button>
      ))}
    </div>
  )
}

function Group({ label, width, caret = true, center = false, children }: { label: string; width: string; caret?: boolean; center?: boolean; children: ReactNode }) {
  return (
    <section className={clsx('flex h-24 shrink-0 flex-col border-r border-[#c0c0c0]', width)}>
      <div className="flex h-[78px] shrink-0 items-start">{children}</div>
      <div className="flex h-[22px] shrink-0 items-center justify-between pr-2 pl-[2px] text-[#006487]">
        <span className={clsx('leading-[22px] whitespace-nowrap', center && 'mr-3 grow text-center')}>{label}</span>
        {caret && <Caret />}
      </div>
    </section>
  )
}

/* Two rows of small tool buttons; '|' draws a thin divider. */
function Tools({ rows, slot = 'w-[23px]' }: { rows: string[][]; slot?: string }) {
  return (
    <div className="flex flex-col pt-[6px] pl-1">
      {rows.map((row, r) => (
        <div key={r} className="flex h-[31px] items-start">
          {row.map((name, i) =>
            name === '|' ? (
              <span key={i} className="mx-[2px] h-5 w-px bg-[#c0c0c0]" />
            ) : (
              <button key={i} type="button" aria-label={name} className={clsx('flex h-[22px] shrink-0 items-center justify-center', slot)}>
                <Icon name={name} />
              </button>
            ),
          )}
        </div>
      ))}
    </div>
  )
}

function TitleBar() {
  const sep = <span className="h-6 w-px bg-[#c0c0c0]" />
  return (
    <header className="flex h-[30px] shrink-0 items-center">
      <div className="flex items-center">
        <span className="w-[47px] pl-1 text-[23px] leading-none font-bold text-[#8298a8]">NX</span>
        {sep}
        <button type="button" aria-label="保存" className="mx-[7px]"><Icon name="save" /></button>
        {sep}
        <button type="button" aria-label="重做" className="mx-1"><Icon name="redo" /></button>
        {sep}
        <div className="flex gap-[5px] px-[6px]">
          <button type="button" aria-label="剪切"><Icon name="cut" /></button>
          <button type="button" aria-label="复制"><Icon name="copy" /></button>
          <button type="button" aria-label="粘贴"><Icon name="paste" /></button>
        </div>
        {sep}
        <button type="button" aria-label="定向" className="flex items-center gap-[5px] px-[5px]"><Icon name="orient" /><Caret /></button>
        {sep}
        <button type="button" aria-label="触控" className="mx-[5px]"><Icon name="hand" /></button>
        {sep}
        <button type="button" className="flex items-center gap-1 pl-[5px]"><Icon name="switchWin" />切换窗口</button>
        <button type="button" className="flex items-center gap-[3px] pl-[6px]"><Icon name="win" />窗口<Caret /></button>
        <span className="ml-[6px] flex"><BarCaret /></span>
      </div>
      <h1 className="ml-auto text-base">NX 12 - 建模</h1>
      <div className="flex w-[748px] items-center justify-end pr-[10px]">
        <span className="mt-[2px] mr-7 text-base font-bold text-[#009999]">SIEMENS</span>
        <div className="flex items-center gap-[18px] text-[#333]">
          <button type="button" aria-label="最小化"><svg viewBox="0 0 12 12" className="size-3"><path d="M2 10H10" stroke="currentColor" strokeWidth="2" /></svg></button>
          <button type="button" aria-label="还原"><svg viewBox="0 0 12 12" className="size-3"><path d="M1 5H9V11H1ZM3 5V1H11V8H9" fill="none" stroke="currentColor" strokeWidth="1.300" /></svg></button>
          <button type="button" aria-label="关闭"><svg viewBox="0 0 12 12" className="size-3"><path d="M1 1L11 11M11 1L1 11" stroke="currentColor" strokeWidth="1.600" /></svg></button>
        </div>
      </div>
    </header>
  )
}

const TABS = ['装配', '曲线', '分析', '视图', '渲染', '工具', '应用模块']

function TabBar() {
  return (
    <nav className="flex h-8 shrink-0 items-end bg-[#bdbdbd] text-base">
      <button type="button" className="h-8 w-[91px] bg-[#559fb9] pr-1 pb-[2px] text-white">文件(F)</button>
      <button type="button" className="ml-[2px] h-[30px] w-[58px] bg-[#efefef] text-[#006487]">主页</button>
      {TABS.map((t) => (
        <button key={t} type="button" className="h-[30px] px-[13px]">{t}</button>
      ))}
      <div className="ml-auto flex h-8 items-center pr-[9px]">
        <label className="flex h-6 w-[156px] items-center border border-[#aaa] bg-white pr-1">
          <input aria-label="查找命令" placeholder="查找命令" className="w-full min-w-0 text-sm outline-none placeholder:text-[#a0a0a0]" />
          <Icon name="search" className="size-4" />
        </label>
        <button type="button" aria-label="全屏" className="ml-3"><Icon name="screen" className="size-4" /></button>
        <button type="button" aria-label="折叠功能区" className="ml-3"><Icon name="collapse" className="size-[14px]" /></button>
        <button type="button" aria-label="帮助" className="ml-3"><Icon name="help" className="size-[14px]" /></button>
      </div>
    </nav>
  )
}

function SketchGallery() {
  const dot = (x: number, y: number) => <circle cx={x} cy={y} r="1.500" fill="#d40000" stroke="#d40000" />
  const cells: [string, ReactNode][] = [
    ['轮廓', <><path d="M4 4V18M4 18Q4 23 9 23Q13 23 13 18V14Q14 9 18 9Q23 9 23 15V18" />{dot(4, 18)}{dot(13, 18)}{dot(23, 18)}</>],
    ['矩形', <><path d="M4 8H24V22H4Z" />{dot(4, 8)}{dot(24, 22)}</>],
    ['直线', <><path d="M5 23L22 6" />{dot(5, 23)}{dot(22, 6)}</>],
    ['圆弧', <><path d="M4 6Q20 6 22 24" />{dot(4, 6)}{dot(17, 11)}{dot(22, 24)}</>],
    ['圆', <circle cx="14" cy="15" r="10" />],
    ['点', <path d="M14 6V22M6 14H22" />],
  ]
  return (
    <>
      <div className="grid h-[78px] w-[117px] shrink-0 grid-cols-3 grid-rows-2 border border-[#b4b4b4] bg-[#fafafa]">
        {cells.map(([label, shape]) => (
          <button key={label} type="button" aria-label={label} className="flex items-center justify-center">
            <svg viewBox="0 0 28 28" className="size-7" fill="none" stroke="#111" strokeWidth="1.300">{shape}</svg>
          </button>
        ))}
      </div>
      <div className="flex h-[78px] w-[21px] flex-col items-center justify-between pt-[10px] pb-2">
        <Caret className="rotate-180 text-[#888]" />
        <Caret />
        <BarCaret />
      </div>
    </>
  )
}

function Ribbon() {
  return (
    <div className="flex h-[106px] shrink-0 border-b-2 border-[#c4c4c4] pt-[5px]">
      <Group label="直接草图" width="w-[200px]" center>
        <BigButton icon="sketch" label="草图" caret={false} width="w-[38px] mr-[9px] ml-[10px]" />
        <SketchGallery />
      </Group>
      <Group label="特征" width="w-[411px]" center>
        <BigButton icon="plane" label="基准平面" width="w-[58px] ml-[11px]" />
        <BigButton icon="extrude" label="拉伸" width="w-[45px]" />
        <BigButton icon="hole" label="孔" caret={false} width="w-[36px]" />
        <SmallRows width="w-[84px] ml-[9px]" items={[['pattern', '阵列特征'], ['unite', '合并'], ['shell', '抽壳']]} />
        <BigButton icon="round" label="边倒圆" width="w-[44px]" />
        <SmallRows width="w-[64px] ml-2" items={[['chamfer', '倒斜角'], ['trim', '修剪体'], ['draft', '拔模']]} />
        <div className="ml-auto pr-1"><MoreButton icon="moreFeat" /></div>
      </Group>
      <Group label="同步建模" width="w-[193px]" center>
        <BigButton icon="moveFace" label="移动面" caret={false} width="w-[44px] ml-[11px]" />
        <SmallRows width="w-[84px] ml-2" items={[['offsetFace', '偏置区域'], ['replaceFace', '替换面'], ['deleteFace', '删除面']]} />
        <div className="ml-auto pr-1"><MoreButton icon="moreSync" /></div>
      </Group>
      <Group label="标准化工具..." width="w-[104px]">
        <Tools rows={[['frames', 'layers', 'layersDoc', '|', 'tag'], ['partCheck', 'toolCheck', 'cubeCheck', '|', 'partEdit']]} />
      </Group>
      <Group label="齿..." width="w-[52px]"><Tools rows={[['gearA', 'gearB'], ['gearHand']]} /></Group>
      <Group label="弹..." width="w-[58px]"><Tools rows={[['springV', '|', 'springD'], ['springY', '|', 'springCut']]} /></Group>
      <Group label="加..." width="w-[52px]"><Tools rows={[['clampCheck', 'clampDoc'], ['sheetClamp', 'csys']]} /></Group>
      <Group label="建模工具 ..." width="w-[98px]">
        <Tools rows={[['triangle', 'tableTri', 'folderPlus', 'folderCog'], ['noteBox', 'brushDim', '|', 'binoc']]} />
      </Group>
      <Group label="'." width="w-[29px]"><Tools rows={[['cubes'], ['cubes']]} /></Group>
      <Group label="尺寸快速格式化工具 - GC工具箱" width="w-[288px]" center>
        <Tools
          rows={[
            ['dimShape', '|', 'xPlain', 'tol1', 'tol2', 'tol3', 'tol4', 'xBox', 'xParen', 'fit1', 'fit2', 'fit3', 'fit4'],
            ['radA', 'radB', '|', 'diaA', 'diaB', 'back'],
          ]}
        />
      </Group>
      <Group label="" width="w-[44px]" caret={false}><BigButton icon="surface" label="曲面" width="w-[44px]" /></Group>
      <Group label="装配" width="w-[204px]" center>
        <BigButton icon="handle" label="处理装配" caret={false} width="w-[58px] ml-[10px]" disabled />
        <BigButton icon="add" label="添加" width="w-[44px] ml-[1px]" />
        <SmallRows width="w-[80px] ml-1" items={[['asmCon', '装配约束'], ['asmMove', '移动组件'], ['asmPat', '阵列组件']]} />
      </Group>
      <div className="ml-auto flex items-end pr-[7px] pb-2"><Caret /></div>
    </div>
  )
}

function Select({ label, value, width, height = 'h-6' }: { label: string; value: string; width: string; height?: string }) {
  return (
    <div className={clsx('relative shrink-0', width)}>
      <select aria-label={label} className={clsx('w-full appearance-none border border-[#a6a6a6] bg-white pl-[3px] outline-none', height)}>
        <option>{value}</option>
      </select>
      <span className="pointer-events-none absolute inset-y-0 right-[6px] flex items-center"><Caret /></span>
    </div>
  )
}

const SNAP = ['gMove', 'gLine', 'gLineMid', 'gCurve', 'gPoly', 'gWave', 'gPerp', 'gCenter', 'gQuad', 'gPlus', 'gSlash', 'gSurf', 'gMesh', 'gGrid']

function Slot({ name, className = 'w-[25px]' }: { name: string; className?: string }) {
  return <button type="button" aria-label={name} className={clsx('flex h-[22px] shrink-0 items-center justify-center', className)}><Icon name={name} className="size-4" /></button>
}

function SelectionBar() {
  return (
    <div className="flex h-9 shrink-0 items-center border-b border-[#828a8c]">
      <button type="button" className="flex items-center gap-1 pl-[10px]">
        <Icon name="menu" className="size-4" /><span>菜单(<u>M</u>)</span><Caret />
      </button>
      <span className="mx-2 h-7 w-px bg-[#c0c0c0]" />
      <div className="ml-1 flex gap-[9px]">
        <Select label="类型过滤器" value="无选择过滤器" width="w-[167px]" />
        <Select label="选择范围" value="仅在工作部件内" width="w-[176px]" />
      </div>
      <div className="ml-1 flex items-center">
        <Slot name="gTree" /><Slot name="gFilter" />
        <button type="button" aria-label="snapOn" className="mr-px flex h-[22px] w-[33px] items-center justify-center gap-1 bg-[#b0d8e2]"><Icon name="snapOn" className="size-[18px]" /><Caret /></button>
        <Slot name="gTarget" /><Slot name="gTree2" /><Slot name="gLasso" /><Slot name="gRect" />
        <Caret className="ml-1 text-[#1a1a1a]" />
        <Slot name="solidFace" className="w-[31px]" /><Slot name="solidCube" className="w-[23px]" />
        {SNAP.map((n) => <Slot key={n} name={n} />)}
      </div>
      <span className="mr-[7px] ml-[6px] h-7 w-px bg-[#c0c0c0]" />
      <Slot name="zoomFit" /><Slot name="panWin" />
      <Slot name="rotate" className="w-[23px] border border-[#b4dce4] bg-[#cce8ee]" />
      <Slot name="tube" /><Slot name="gDoc" />
      {['redGrid', 'section', 'bCube', 'rgb'].map((n) => (
        <button key={n} type="button" aria-label={n} className="flex w-10 shrink-0 items-center gap-2 pl-[6px]"><Icon name={n} className="size-4" /><Caret /></button>
      ))}
      <span className="mx-[6px] h-7 w-px bg-[#c0c0c0]" />
      <span className="mt-3 mr-[7px] ml-auto flex"><Caret /></span>
    </div>
  )
}

/* ---------- left side ---------- */

function ResourceBar() {
  const items: [string, string, string][] = [
    ['navAsm', '装配导航器', 'h-[41px]'],
    ['navCon', '约束导航器', 'h-[41px]'],
    ['navPart', '部件导航器', 'h-[46px]'],
    ['books', '重用库', 'h-[38px]'],
    ['info', 'HD3D 工具', 'h-[70px]'],
    ['web', 'Web 浏览器', 'h-[38px]'],
    ['clock', '历史记录', 'h-[70px]'],
    ['rainbow', '系统材料', 'h-[14px]'],
    ['boltWand', 'Process Studio', 'h-[70px]'],
    ['robot', '角色', 'h-[14px]'],
  ]
  return (
    <aside className="flex w-8 shrink-0 flex-col items-center border-r border-[#a0a0a0] bg-[#bdbdbd]">
      <button type="button" aria-label="资源条选项" className="mt-[6px] mb-[22px]"><Icon name="gear" className="size-[14px] text-[#333]" /></button>
      {items.map(([icon, label, h]) => (
        <button
          key={icon}
          type="button"
          aria-label={label}
          className={clsx('flex shrink-0 items-center justify-center pl-1', h, icon === 'navPart' ? 'relative -mr-[3px] w-[31px] border border-r-0 border-[#a0a0a0] bg-[#efefef]' : 'w-full')}
        >
          <Icon name={icon} className="size-[22px]" />
        </button>
      ))}
    </aside>
  )
}

type Row = { label: string; icon: string; box?: '+' | '-'; tick?: boolean; child?: boolean; bold?: boolean }

const ROWS: Row[] = [
  { label: '模型视图', icon: 'treeView', box: '+' },
  { label: '摄像机', icon: 'camera', box: '+', tick: true },
  { label: '用户表达式', icon: 'folderEq', box: '+' },
  { label: '模型历史记录', icon: 'folder', box: '-' },
  { label: '基准坐标系 (0)', icon: 'csys', child: true },
  { label: '拉伸 (1)', icon: 'extrude', child: true },
  { label: '拉伸 (2)', icon: 'extrude', child: true, bold: true },
]

function TreeCell({ row }: { row: Row }) {
  if (row.child) {
    return (
      <div className="flex h-[23px] items-center pl-7">
        <span className={clsx('-mt-px w-px border-l border-dotted border-[#888]', row.bold ? 'mb-3 h-3' : 'h-6')} />
        <span className="w-[10px] border-t border-dotted border-[#888]" />
        <span className="relative mr-[3px] flex size-[12px] shrink-0">
          <input type="checkbox" defaultChecked aria-label={row.label} className="size-3 appearance-none border border-black bg-white" />
          <Icon name="tick" className="pointer-events-none absolute top-0 left-0 size-3" />
        </span>
        <Icon name={row.icon} className="mr-1 size-[15px]" />
        <span className={clsx(row.bold && 'font-bold')}>{row.label}</span>
      </div>
    )
  }
  return (
    <div className="flex h-[23px] items-center pl-1">
      <button type="button" aria-label="展开" className="relative flex size-[11px] shrink-0 border border-[#d4d4d4] bg-white">
        <svg viewBox="0 0 9 9" className="size-[9px]"><path d={row.box === '+' ? 'M1 4.500H8M4.500 1V8' : 'M1 4.500H8'} stroke="#111" /></svg>
      </button>
      <span className="w-1 shrink-0 border-t border-dotted border-[#888]" />
      {row.tick && <Icon name="tick" className="mr-px ml-[2px] size-[13px]" />}
      <Icon name={row.icon} className="mr-[3px] size-4" />
      {row.label}
    </div>
  )
}

function Navigator() {
  const blanks = Array.from({ length: 22 }, (_, i) => i)
  return (
    <div className="flex w-[384px] shrink-0 flex-col border-r-2 border-[#8c9498] bg-[#efefef] pr-2 pl-[6px]">
      <div className="flex h-[31px] items-center justify-between pr-[7px] pl-1 text-[15px]">
        <h2>部件导航器</h2>
        <button type="button" aria-label="最大化" className="mt-[2px] h-[13px] w-[14px] border border-t-2 border-[#111]" />
      </div>
      <div className="flex min-h-0 flex-1 flex-col border border-[#b4b4b4] p-px">
        <div className="min-h-0 flex-1 overflow-hidden bg-[#fafafa]">
          <table className="w-full table-fixed border-collapse text-[15px]">
            <colgroup><col className="w-[200px]" /><col className="w-[100px]" /><col /></colgroup>
            <thead>
              <tr className="h-6 bg-[#efefef] text-left">
                <th className="border-r border-b border-[#c8c8c8] pl-[6px] font-normal">
                  <span className="flex items-center gap-[18px]">名称<svg viewBox="0 0 12 7" className="h-[7px] w-3"><path d="M0 7L6 0L12 7Z" /></svg></span>
                </th>
                <th className="border-r border-b border-[#c8c8c8] pl-[6px] font-normal">最新</th>
                <th className="border-b border-[#c8c8c8] pl-[6px] font-normal">附注</th>
              </tr>
            </thead>
            <tbody className="whitespace-nowrap">
              {ROWS.map((row) => (
                <tr key={row.label} className="h-6 border-b border-[#e3e3e3] even:bg-[#f4f4f4]">
                  <td className="overflow-hidden border-r border-[#e3e3e3] p-0"><TreeCell row={row} /></td>
                  <td className="border-r border-[#e3e3e3]" />
                  <td />
                </tr>
              ))}
              {blanks.map((i) => (
                <tr key={i} className="h-6 border-b border-[#e3e3e3] even:bg-[#f4f4f4]">
                  <td className="border-r border-[#e3e3e3]" />
                  <td className="border-r border-[#e3e3e3]" />
                  <td />
                </tr>
              ))}
            </tbody>
          </table>
        </div>
        <div className="flex h-5 shrink-0 items-center">
          <svg viewBox="0 0 21 20" className="h-5 w-[21px]"><path d="M12 5L8 10L12 15" fill="none" stroke="#444" strokeWidth="2" /></svg>
          <div className="mr-[29px] h-[19px] flex-1 bg-[#cdcdcd]" />
          <svg viewBox="0 0 21 20" className="h-5 w-[21px]"><path d="M8 5L12 10L8 15" fill="none" stroke="#444" strokeWidth="2" /></svg>
        </div>
      </div>
      <div className="h-[6px] shrink-0 border-b border-[#a0a0a0] bg-[#bdbdbd]" />
      {['相关性', '细节', '预览'].map((t) => (
        <button key={t} type="button" className="flex h-7 shrink-0 items-center justify-between border-b-2 border-[#d0d0d0] pr-[6px] pl-[6px] text-[18px] text-[#006487]">
          <span className="pt-[3px]">{t}</span>
          <Chevron />
        </button>
      ))}
      <div className="h-[5px] shrink-0" />
    </div>
  )
}

/* ---------- 3D model ---------- */

// Affine image of the unit circle that lies in the flange plane.
const RX = 219
const SKEW = -15.5
const RY = 271.1
// The same ellipse by its half axes and tilt.
const MINOR = 218
const MAJOR = 272.35
const TILT = 7.38
// Extrusion vectors: flange thickness and full body length.
const THIN: Pt = [-37.4, -6.2]
const FULL: Pt = [-269, -44.7]

function Disc({ c, k, fill = 'none', stroke = '#2a2a2a' }: { c: Pt; k: number; fill?: string; stroke?: string }) {
  const a = (TILT * Math.PI) / 180
  const dx = MAJOR * k * Math.sin(a)
  const dy = -MAJOR * k * Math.cos(a)
  const arc = `A${MINOR * k} ${MAJOR * k} ${TILT} 1 1`
  return <path d={`M${c[0] + dx} ${c[1] + dy}${arc} ${c[0] - dx} ${c[1] - dy}${arc} ${c[0] + dx} ${c[1] + dy}Z`} fill={fill} stroke={stroke} />
}

const shift = (p: Pt, d: Pt): Pt => [p[0] + d[0], p[1] + d[1]]

const MAIN: Pt = [1249, 720.5]
const BORE = 0.7125
const EAR = 0.362
const EYE = 0.172

// Point where the line from p touches the ear's outer curve around c.
function touch(p: Pt, c: Pt, side: number): Pt {
  const u = (p[0] - c[0]) / RX
  const v = (p[1] - c[1] - SKEW * u) / RY
  const t = Math.atan2(v, u) + side * Math.acos(EAR / Math.hypot(u, v))
  return [c[0] + RX * EAR * Math.cos(t), c[1] + SKEW * EAR * Math.cos(t) + RY * EAR * Math.sin(t)]
}

const EARS = (
  [
    { id: 'top', c: [1165.5, 400.7], b: [1112, 522], e: [1263, 449], side: 1, flat: '#a46000' },
    { id: 'right', c: [1520.5, 770], b: [1466, 660], e: [1431, 855], side: 1, flat: '#c87800' },
    { id: 'low', c: [1061.5, 991], b: [1052, 859], e: [1168, 981], side: -1, flat: '#ffa300' },
  ] as { id: string; c: Pt; b: Pt; e: Pt; side: number; flat: string }[]
).map((ear) => ({ ...ear, a: touch(ear.b, ear.c, ear.side), f: touch(ear.e, ear.c, -ear.side) }))

const STOPS: [number, string][] = [
  [0, '#ffb400'], [0.2, '#ffb000'], [0.37, '#ff9c00'], [0.42, '#ee8e00'], [0.54, '#c87800'], [0.72, '#a46200'], [0.84, '#7c4a00'], [0.93, '#663b00'], [1, '#663b00'],
]

function Shade({ id, c, k, inner = false }: { id: string; c: Pt; k: number; inner?: boolean }) {
  const list = inner ? STOPS.map(([o, col]): [number, string] => [1 - o, col]).reverse() : STOPS
  return (
    <linearGradient id={id} gradientUnits="userSpaceOnUse" x1={c[0] + 41 * k} y1={c[1] - 269 * k} x2={c[0] - 48 * k} y2={c[1] + 268 * k}>
      {list.map(([o, col]) => <stop key={o} offset={o} stopColor={col} />)}
    </linearGradient>
  )
}

// Side wall swept between two parallel discs.
function Wall({ from, to, k, fill }: { from: Pt; to: Pt; k: number; fill: string }) {
  const up: Pt = [41 * k, -269 * k]
  const down: Pt = [-41 * k, 269 * k]
  return <polygon fill={fill} points={pts([shift(from, up), shift(to, up), shift(to, down), shift(from, down)])} />
}

function Body() {
  const back = shift(MAIN, FULL)
  return (
    <>
      <Disc c={back} k={1} fill="url(#bodyShade)" />
      <Wall from={back} to={MAIN} k={1} fill="url(#bodyShade)" />
    </>
  )
}

function Model() {
  return (
    <svg viewBox="425 230 1414 826" preserveAspectRatio="xMinYMin slice" className="absolute inset-0 size-full" role="img" aria-label="EX2 模型">
      <defs>
        <linearGradient id="sky" gradientUnits="userSpaceOnUse" x1="0" y1="230" x2="0" y2="850">
          <stop offset="0" stopColor="#b3b4b6" /><stop offset="1" stopColor="#e6e7e9" />
        </linearGradient>
        <Shade id="bodyShade" c={shift(MAIN, FULL)} k={1} />
        <Shade id="boreShade" c={MAIN} k={BORE} inner />
        {EARS.map((e) => <Shade key={e.id} id={`side-${e.id}`} c={e.c} k={EAR} />)}
        {EARS.map((e) => <Shade key={e.id} id={`eye-${e.id}`} c={e.c} k={EYE} inner />)}
        {[...EARS.map((e) => ({ id: e.id, c: e.c, k: EYE, d: THIN })), { id: 'bore', c: MAIN, k: BORE, d: FULL }].map(({ id, c, k, d }) => (
          <g key={id}>
            <clipPath id={`front-${id}`}><Disc c={c} k={k} /></clipPath>
            <clipPath id={`back-${id}`}><Disc c={shift(c, d)} k={k} /></clipPath>
          </g>
        ))}
      </defs>
      <rect x="425" y="230" width="2400" height="1600" fill="url(#sky)" />
      <Body />

      {/* flange rim */}
      <Disc c={shift(MAIN, THIN)} k={1} fill="url(#bodyShade)" />
      <Wall from={shift(MAIN, THIN)} to={MAIN} k={1} fill="url(#bodyShade)" />

      {EARS.map((e) => {
        const back = shift(e.c, THIN)
        return (
          <g key={e.id}>
            {e.id !== 'right' && (
              <>
                <Disc c={back} k={EAR} fill={`url(#side-${e.id})`} />
                <Wall from={back} to={e.c} k={EAR} fill={`url(#side-${e.id})`} />
                <polygon fill={e.flat} stroke="#2a2a2a" points={pts([e.a, e.b, shift(e.b, THIN), shift(e.a, THIN)])} />
              </>
            )}
            <Disc c={e.c} k={EAR} fill="#f29000" />
            <polygon fill="#f29000" points={pts([e.a, e.b, MAIN, e.e, e.f, e.c])} />
            <path d={`M${e.a}L${e.b}M${e.e}L${e.f}`} stroke="#2a2a2a" fill="none" />
          </g>
        )
      })}
      <Disc c={MAIN} k={1} fill="#f29000" />

      {EARS.map((e) => (
        <g key={e.id}>
          <g clipPath={`url(#front-${e.id})`}>
            <Disc c={e.c} k={EYE} fill={`url(#eye-${e.id})`} />
            <g clipPath={`url(#back-${e.id})`}>
              <rect x="425" y="230" width="1500" height="900" fill="url(#sky)" />
              <Body />
            </g>
            <Disc c={shift(e.c, THIN)} k={EYE} />
          </g>
          <Disc c={e.c} k={EYE} />
        </g>
      ))}

      <g clipPath="url(#front-bore)">
        <Disc c={MAIN} k={BORE} fill="url(#boreShade)" />
        <Disc c={shift(MAIN, THIN)} k={BORE} />
        <g clipPath="url(#back-bore)"><rect x="425" y="230" width="1500" height="900" fill="url(#sky)" /></g>
        <Disc c={shift(MAIN, FULL)} k={BORE} />
      </g>
      <Disc c={MAIN} k={BORE} />

      {/* datum coordinate system */}
      <g fill="none">
        <path d="M1062 688L1074 623L1127 632" stroke="#ffa048" strokeWidth="3" />
        <path d="M1127 632L1166 639L1155 705M1114 698L1130 610" stroke="#2410f0" strokeWidth="1.300" strokeDasharray="4 1" />
        <path d="M1130 610L1135 578" stroke="#d0d0d0" strokeWidth="1.500" />
        <path d="M1137 567L1132 583L1138 583Z" fill="#d0d0d0" />
        <path d="M1020 682L1112 698" stroke="#8cb868" strokeWidth="1.300" />
        <path d="M1010 679L1024 678L1023 684Z" fill="#4a9848" />
        <path d="M1114 698L1190 710" stroke="#2410f0" strokeWidth="1.300" />
        <path d="M1183 706L1194 711L1182 713Z" fill="#0000d8" />
        <path d="M1107 697L1121 699M1114 691V705" stroke="#0000e0" strokeWidth="2" />
      </g>
      <path d="M993 674L1004 675L1002 684L992 682Z" fill="#606060" />
      <path d="M1225 712L1231 713L1230 722L1224 721Z" fill="#a8c850" />
      <path d="M1231 713L1238 714L1237 723L1230 722Z" fill="#bcf060" />
      <g fontSize="13" fontFamily="Noto Sans, sans-serif">
        <text x="1134" y="565" fill="#d0d0d0">Y</text>
        <text x="1194" y="717" fill="#4020f0">X</text>
        <text x="1000" y="684" fill="#5cb850">Z</text>
      </g>

      {/* view triad */}
      <g stroke="#999"><path d="M475 959L512 965L508 990L470 984Z" fill="#d2d2d2" /><path d="M491 962L487 988" /></g>
      <path d="M492 984L497 958" stroke="#8cc090" strokeWidth="3" />
      <path d="M496 963L498 950" stroke="#309030" strokeWidth="3" />
      <path d="M499 944L495 956H502Z" fill="#309030" />
      <path d="M491 989L464 984" stroke="#0a40e8" strokeWidth="3" />
      <path d="M457 982L467 980L466 987Z" fill="#0a30c0" />
      <path d="M491 989L510 992" stroke="#c03030" strokeWidth="3" />
      <path d="M517 994L508 989L507 996Z" fill="#a02020" />
      <circle cx="491" cy="990" r="3.500" fill="#b0b0b0" />
      <g fontSize="12" fontFamily="Noto Sans, sans-serif">
        <text x="496" y="944" fill="#309030">Y</text>
        <text x="448" y="986" fill="#3050f0">Z</text>
        <text x="517" y="998" fill="#d03030">X</text>
      </g>

      {/* annotation */}
      <path d="M590 490L603 476L605 479Q635 468 659 459Q635 477 608 487L609 490Z" fill="#ff3b38" />
      <text x="689" y="447" fontSize="20" fill="#ff3b38" fontFamily="Noto Sans, Noto Sans CJK SC, sans-serif">选择中心的YZ平面</text>
    </svg>
  )
}

/* ---------- dialog ---------- */

function Section({ title, open, height, children }: { title: string; open?: boolean; height: string; children?: ReactNode }) {
  return (
    <section className={clsx('mb-[3px] flex flex-col border-b-2 border-[#a0a0a0] bg-[#efefef]', height)}>
      <h3>
        <button type="button" aria-expanded={!!open} className="flex h-[28px] w-full items-center justify-between pr-[6px] pl-[7px] text-[18px] text-[#006487]">
          <span className="pt-[2px]">{title}</span>
          <Chevron up={open} />
        </button>
      </h3>
      {children}
    </section>
  )
}

function MirrorDialog() {
  return (
    <div role="dialog" aria-label="镜像特征" className="absolute top-[73px] left-[200px] w-[380px] border border-[#a8a8a8] bg-[#dcdcdc] text-[15px]">
      <div className="-mx-px -mt-px flex h-[27px] items-center bg-[#559fb9] px-2 text-white">
        <Icon name="gear" className="mr-2 size-[15px]" />
        <h2 className="grow text-[18px] leading-none">镜像特征</h2>
        <button type="button" aria-label="重置" className="mr-[10px]"><svg viewBox="0 0 14 14" className="size-[14px]" fill="none" stroke="currentColor" strokeWidth="2"><path d="M7 2A5 5 0 1 1 2 6M0 7L2.500 4L5 7" /></svg></button>
        <button type="button" aria-label="关闭对话框"><svg viewBox="0 0 12 12" className="mr-[2px] size-3"><path d="M1 1L11 11M11 1L1 11" stroke="currentColor" strokeWidth="2.200" /></svg></button>
      </div>
      <div className="px-[5px] pt-1">
        <Section title="要镜像的特征" open height="h-[75px]">
          <div className="flex h-10 items-center pt-1 pr-[9px] pl-[10px]">
            <Icon name="tick" className="mr-1 size-[14px]" />
            <span className="grow">选择特征 (1)</span>
            <button type="button" aria-label="选择特征" className="flex size-8 items-center justify-center border border-[#909090]">
              <svg viewBox="0 0 22 22" className="size-[22px]">
                <path d="M1 11L11 7L21 11V18L11 21L1 18Z" fill="#f0f0f0" stroke="#444" /><path d="M1 11L11 15L21 11M11 15V21" fill="none" stroke="#444" />
                <path d="M8 1H14V11H8Z" fill="#ffb020" stroke="#e01800" strokeWidth="1.500" />
              </svg>
            </button>
          </div>
        </Section>
        <Section title="参考点" height="h-[28px]" />
        <Section title="镜像平面" open height="h-[105px]">
          <div className="flex h-9 items-center justify-between pt-1 pr-[9px] pl-[9px]">
            <span>平面</span>
            <Select label="平面" value="现有平面" width="w-[152px]" height="h-7" />
          </div>
          <div className="flex gap-[2px] pr-[9px] pl-[9px]">
            <div className="flex h-8 grow items-center bg-[#ffe078] pl-[2px]"><Icon name="tick" className="mr-1 size-[14px]" />选择平面 (1)</div>
            <button type="button" aria-label="选择平面" className="flex size-8 items-center justify-center bg-[#ffe078]">
              <svg viewBox="0 0 22 24" className="h-6 w-[22px]">
                <defs><linearGradient id="faceFill" x2="1" y2="1"><stop offset="0" stopColor="#ffff60" /><stop offset="0.4" stopColor="#fff040" /><stop offset="1" stopColor="#ffb030" /></linearGradient></defs>
                <path d="M2 1L20 6V23L2 18Z" fill="url(#faceFill)" stroke="#c80000" strokeWidth="1.300" />
              </svg>
            </button>
          </div>
        </Section>
        <Section title="源特征的可重用引用" height="h-[28px]" />
        <Section title="设置" height="h-[28px]" />
        <Section title="预览" open height="h-[76px]">
          <div className="flex h-10 items-center justify-end gap-[2px] pt-1 pr-[9px]">
            <span>显示结果</span>
            <button type="button" aria-label="显示结果" className="flex size-8 items-center justify-center border border-[#909090]">
              <span className="flex size-[26px] items-center justify-center border border-dotted border-[#444]">
                <svg viewBox="0 0 24 24" className="size-6"><circle cx="9" cy="9" r="7.500" fill="#eef2fa" stroke="#555" strokeWidth="1.500" /><path d="M15 15L22 22" stroke="#444" strokeWidth="4" /><path d="M15 15L18 18" stroke="#d8c060" strokeWidth="3" /></svg>
              </span>
            </button>
          </div>
        </Section>
        <div className="flex justify-end gap-[5px] pt-2 pr-[10px] pb-[9px]">
          <button type="button" className="h-7 w-[60px] bg-[#72b2c8] text-white">确定</button>
          <button type="button" className="h-7 w-[60px] border border-[#909090]">应用</button>
          <button type="button" className="h-7 w-[60px] border border-[#909090]">取消</button>
        </div>
      </div>
    </div>
  )
}

export default function App() {
  return (
    <div className="flex h-screen w-full overflow-hidden bg-[#efefef] text-sm text-[#1a1a1a] [font-family:'Noto_Sans','Noto_Sans_CJK_SC',sans-serif]">
      {/* strip of the desktop behind the window */}
      <div className="flex w-[9px] shrink-0 flex-col">
        <div className="h-[200px] bg-linear-to-b from-[#24304c] to-[#26343c]" />
        <div className="h-[122px] bg-linear-to-b from-[#2a3c3c] to-[#243824]" />
        <div className="h-[58px] bg-[#505c5e]" />
        <div className="h-[60px] bg-[#283240]" />
        <div className="h-[58px] bg-[#b96a2c]" />
        <div className="grow bg-linear-to-b from-[#2c3844] via-[#1e2024] to-[#24242c]" />
      </div>

      <div className="relative flex min-w-0 grow flex-col">
        <TitleBar />
        <TabBar />
        <Ribbon />
        <SelectionBar />
        <main className="relative flex min-h-0 grow">
          <ResourceBar />
          <Navigator />
          <div className="flex min-w-0 grow flex-col">
            <div className="flex h-[26px] shrink-0 border-b-2 border-[#559fb9]">
              <button type="button" className="flex w-[117px] items-center gap-[6px] bg-[#559fb9] pl-[6px] text-[15px] text-white">
                <Icon name="part" className="size-[15px]" />EX2.prt<Icon name="editDoc" className="size-[11px]" />
                <svg viewBox="0 0 9 9" className="size-[9px]"><path d="M1 1L8 8M8 1L1 8" stroke="#c4c4c4" strokeWidth="2" /></svg>
              </button>
            </div>
            <div className="relative min-h-0 grow"><Model /></div>
          </div>
          <MirrorDialog />
        </main>
        <footer className="flex h-6 shrink-0 items-center border-t-2 border-[#b0b0b0] pl-[3px]">
          <span className="grow font-bold">水平拖动光标以绕 Z 轴旋转视图</span>
          <Icon name="kbd" className="mr-1 size-4" />
          <Icon name="screen" className="mr-[55px] size-4" />
        </footer>
        <p className="absolute right-2 bottom-[6px] text-base text-white/90 [font-family:'Liberation_Sans',sans-serif] [text-shadow:1px_1px_1px_#999]">https://blog.csdn.net/weixin_43942093</p>
      </div>
    </div>
  )
}
